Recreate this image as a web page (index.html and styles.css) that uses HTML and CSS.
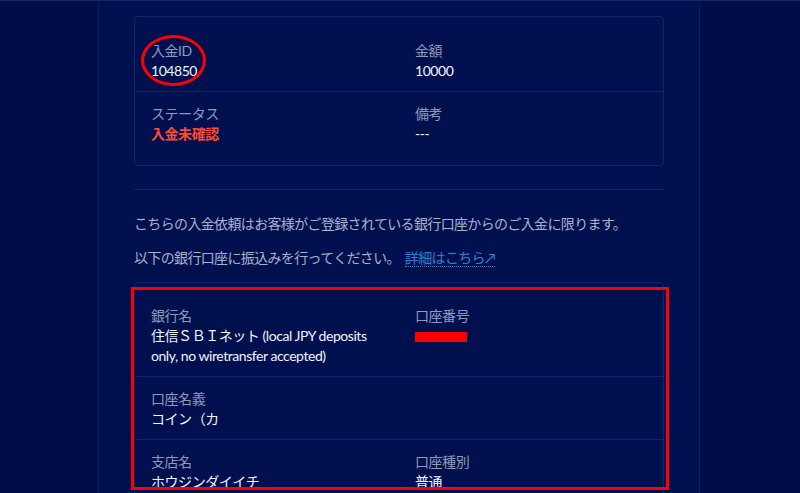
FILE: index.html
```html
<!DOCTYPE html>
<html lang="ja">
<head>
    <meta charset="UTF-8">
    <meta name="viewport" content="width=device-width, initial-scale=1.0">
    <title>入金詳細</title>
    <link rel="stylesheet" href="styles.css">
</head>
<body>
    <div class="page">
        <div class="card">
            <div class="row">
                <div class="cell">
                    <span class="mark-circle"></span>
                    <div class="label">入金ID</div>
                    <div class="value">104850</div>
                </div>
                <div class="cell">
                    <div class="label">金額</div>
                    <div class="value">10000</div>
                </div>
            </div>
            <div class="row">
                <div class="cell">
                    <div class="label">ステータス</div>
                    <div class="value status">入金未確認</div>
                </div>
                <div class="cell">
                    <div class="label">備考</div>
                    <div class="value">---</div>
                </div>
            </div>
        </div>

        <hr class="divider">

        <p class="note">こちらの入金依頼はお客様がご登録されている銀行口座からのご入金に限ります。</p>
        <p class="note">以下の銀行口座に振込みを行ってください。 <a class="link" href="#">詳細はこちら↗</a></p>

        <div class="card bank">
            <span class="mark-box"></span>
            <div class="row">
                <div class="cell">
                    <div class="label">銀行名</div>
                    <div class="value">住信ＳＢＩネット (local JPY deposits only, no wiretransfer accepted)</div>
                </div>
                <div class="cell">
                    <div class="label">口座番号</div>
                    <div class="value"><span class="redacted"></span></div>
                </div>
            </div>
            <div class="row">
                <div class="cell">
                    <div class="label">口座名義</div>
                    <div class="value">コイン（カ</div>
                </div>
                <div class="cell"></div>
            </div>
            <div class="row">
                <div class="cell">
                    <div class="label">支店名</div>
                    <div class="value">ホウジンダイイチ</div>
                </div>
                <div class="cell">
                    <div class="label">口座種別</div>
                    <div class="value">普通</div>
                </div>
            </div>
        </div>
    </div>
</body>
</html>
```

FILE: styles.css
```css
html, body {
    height: 100%;
}
body {
    margin: 0;
    font-family: Lato, "Noto Sans CJK JP", sans-serif;
    font-size: 14px;
    line-height: 20px;
    letter-spacing: -0.45px;
    background-color: #000e47;
    color: #eef0f7;
    overflow: hidden;
    border-top: 1px solid #15266a;
}
.page {
    width: 530px;
    min-height: 100%;
    margin-left: 98px;
    padding: 15px 35px 0;
    background-color: #00104e;
    border-left: 1px solid #0a1d6a;
    border-right: 1px solid #0a1d6a;
}
.card {
    position: relative;
    border: 1px solid #13256a;
    border-radius: 4px;
    padding: 11px 0;
}
.row {
    display: grid;
    grid-template-columns: 1fr 1fr;
    border-bottom: 1px solid #13256a;
}
.row:last-child {
    border-bottom: none;
}
.cell {
    position: relative;
    padding: 12px 16px 10px;
}
.row:first-child .cell {
    padding-top: 13px;
}
.label {
    color: #9199ba;
}
.value {
    color: #f1f3f8;
}
.status {
    color: #ff4b33;
    font-weight: bold;
}
.divider {
    border: none;
    border-top: 1px solid #13256a;
    margin: 23px 0 0;
}
.note {
    margin: 24px 0 14px;
    color: #aab1cc;
    letter-spacing: -0.65px;
}
.note + .note {
    margin-top: 14px;
}
.link {
    color: #2f80d3;
    text-decoration: none;
    border-bottom: 1px dotted #2f80d3;
    margin-left: 2px;
}
.redacted {
    display: inline-block;
    width: 52px;
    height: 10px;
    background-color: #ff0000;
    vertical-align: -1px;
}
.mark-circle {
    position: absolute;
    left: 6px;
    top: 7px;
    width: 59px;
    height: 45px;
    border: 3px solid #ff0000;
    border-radius: 50%;
}
.mark-box {
    position: absolute;
    left: -4px;
    top: 4px;
    width: 532px;
    height: 197px;
    border: 3px solid #ff0000;
    z-index: 1;
}
```
